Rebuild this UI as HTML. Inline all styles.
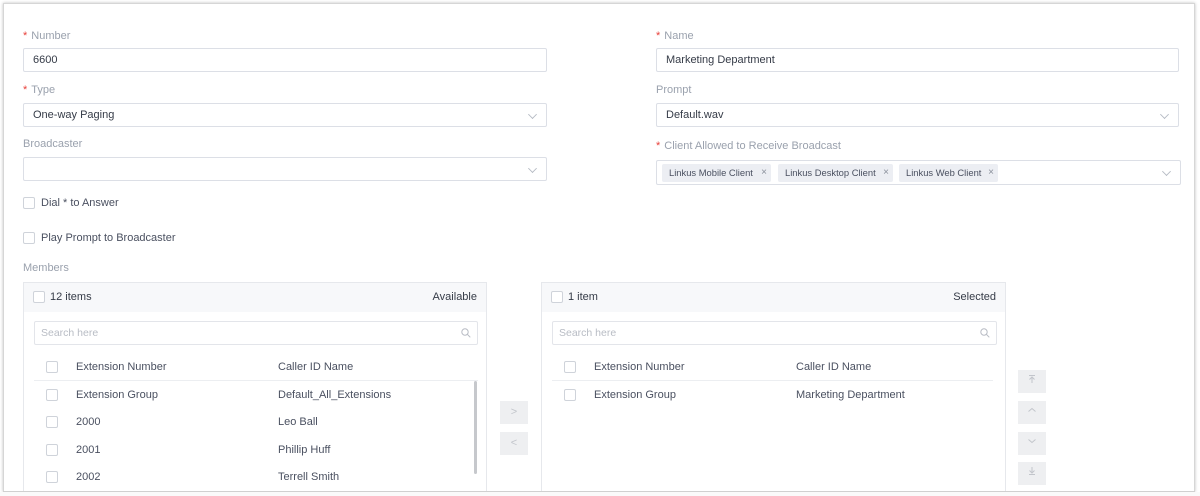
<!DOCTYPE html>
<html><head><meta charset="utf-8"><style>
*{box-sizing:border-box;margin:0;padding:0}
html,body{width:1200px;height:496px;overflow:hidden}
body{background:#fff;font-family:"Liberation Sans",sans-serif;font-size:11px;color:#353b47;position:relative}
.frame{position:absolute;left:3px;top:3px;width:1192px;height:489px;border:1px solid #d6d6d6;box-shadow:0 0 3px rgba(0,0,0,.25);background:#fff}
.a{position:absolute}
.lbl{color:#9aa1ad;font-size:11px}
.lbl b{color:#e8403a;font-weight:normal;margin-right:4px}
.inp{position:absolute;height:24px;border:1px solid #dcdfe6;border-radius:2px;padding-left:9px;line-height:22px;font-size:11px;color:#353b47}
.chev{position:absolute;right:10px;top:7px;width:7px;height:7px;border-right:1px solid #b5bac3;border-bottom:1px solid #b5bac3;transform:rotate(45deg) scale(.9);transform-origin:center}
.cb{position:absolute;width:12px;height:12px;border:1px solid #cfd3da;border-radius:2px;background:#fff}
.tag{position:absolute;top:3px;height:18px;background:#eceef3;border-radius:2px;padding:0 0 0 7px;line-height:18px;font-size:9.4px;color:#4a5060;white-space:nowrap}
.tag i{font-style:normal;font-size:10px;color:#8a909b;position:absolute;right:4px;top:0}
.panel{position:absolute;top:282px;height:215px;border:1px solid #e6e8ec;border-bottom:none}
.ph{height:29px;background:#f7f8fa;position:relative}
.srch{position:absolute;height:24px;border:1px solid #e3e5ea;border-radius:2px;padding-left:6px;line-height:22px;color:#b8bcc4;font-size:10.5px}
.srch svg{position:absolute;right:6px;top:6px}
.btn{position:absolute;width:28px;height:23px;background:#eeeff1;color:#c2c5cb;text-align:center;line-height:22px;font-size:11px}
.t{position:absolute;font-size:11px;color:#4a5060;line-height:13px;white-space:nowrap}
</style></head><body>
<div class="frame"></div>
<div class="a lbl" style="left:23px;top:30px"><b>*</b>Number</div>
<div class="inp" style="left:23px;top:48px;width:524px">6600</div>
<div class="a lbl" style="left:23px;top:84px"><b>*</b>Type</div>
<div class="inp" style="left:23px;top:103px;width:524px">One-way Paging<span class="chev"></span></div>
<div class="a lbl" style="left:23px;top:138px">Broadcaster</div>
<div class="inp" style="left:23px;top:157px;width:524px"><span class="chev"></span></div>
<div class="cb" style="left:23px;top:197px"></div><div class="t" style="left:41px;top:197px">Dial * to Answer</div>
<div class="cb" style="left:23px;top:232px"></div><div class="t" style="left:41px;top:232px">Play Prompt to Broadcaster</div>
<div class="a lbl" style="left:23px;top:262px">Members</div>

<div class="a lbl" style="left:656px;top:30px"><b>*</b>Name</div>
<div class="inp" style="left:656px;top:48px;width:523px">Marketing Department</div>
<div class="a lbl" style="left:656px;top:84px">Prompt</div>
<div class="inp" style="left:656px;top:103px;width:523px">Default.wav<span class="chev"></span></div>
<div class="a lbl" style="left:656px;top:140px"><b>*</b>Client Allowed to Receive Broadcast</div>
<div class="inp" style="left:656px;top:160px;width:525px;height:25px">
<span class="tag" style="left:5px;width:109px">Linkus Mobile Client<i>×</i></span>
<span class="tag" style="left:121px;width:115px">Linkus Desktop Client<i>×</i></span>
<span class="tag" style="left:242px;width:99px">Linkus Web Client<i>×</i></span>
<span class="chev"></span></div>

<div class="panel" style="left:23px;width:464px">
<div class="ph"><div class="cb" style="left:9px;top:8px"></div><span class="t" style="left:26px;top:8px;color:#353b47">12 items</span><span class="t" style="right:9px;top:8px;color:#353b47">Available</span></div>
<div class="srch" style="left:10px;top:38px;width:444px">Search here<svg width="10" height="10" viewBox="0 0 10 10"><circle cx="4" cy="4" r="3.2" fill="none" stroke="#b8bcc4"/><path d="M6.4 6.4L9.3 9.3" stroke="#b8bcc4"/></svg></div>
<div class="cb" style="left:22px;top:78px"></div><span class="t" style="left:52px;top:78px">Extension Number</span><span class="t" style="left:254px;top:78px">Caller ID Name</span>
<div class="a" style="left:10px;top:97px;width:444px;height:1px;background:#eceef1"></div>
<div class="a" style="left:450px;top:98px;width:3px;height:93px;background:#c6c8cc;border-radius:2px"></div>
<div class="cb" style="left:22px;top:106px"></div><span class="t" style="left:52px;top:106px">Extension Group</span><span class="t" style="left:254px;top:106px">Default_All_Extensions</span>
<div class="cb" style="left:22px;top:133px"></div><span class="t" style="left:52px;top:133px">2000</span><span class="t" style="left:254px;top:133px">Leo Ball</span>
<div class="cb" style="left:22px;top:161px"></div><span class="t" style="left:52px;top:161px">2001</span><span class="t" style="left:254px;top:161px">Phillip Huff</span>
<div class="cb" style="left:22px;top:188px"></div><span class="t" style="left:52px;top:188px">2002</span><span class="t" style="left:254px;top:188px">Terrell Smith</span>
</div>
<div class="btn" style="left:500px;top:401px">&gt;</div>
<div class="btn" style="left:500px;top:432px">&lt;</div>

<div class="panel" style="left:541px;width:465px">
<div class="ph"><div class="cb" style="left:9px;top:8px"></div><span class="t" style="left:26px;top:8px;color:#353b47">1 item</span><span class="t" style="right:9px;top:8px;color:#353b47">Selected</span></div>
<div class="srch" style="left:10px;top:38px;width:445px">Search here<svg width="10" height="10" viewBox="0 0 10 10"><circle cx="4" cy="4" r="3.2" fill="none" stroke="#b8bcc4"/><path d="M6.4 6.4L9.3 9.3" stroke="#b8bcc4"/></svg></div>
<div class="cb" style="left:22px;top:78px"></div><span class="t" style="left:52px;top:78px">Extension Number</span><span class="t" style="left:254px;top:78px">Caller ID Name</span>
<div class="a" style="left:10px;top:97px;width:441px;height:1px;background:#eceef1"></div>
<div class="cb" style="left:22px;top:106px"></div><span class="t" style="left:52px;top:106px">Extension Group</span><span class="t" style="left:254px;top:106px">Marketing Department</span>
</div>
<div class="btn" style="left:1018px;top:370px"><svg width="10" height="10" viewBox="0 0 10 10"><path d="M2 1.5H8M5 3V9M2.5 5.5L5 3L7.5 5.5" fill="none" stroke="#c2c5cb"/></svg></div>
<div class="btn" style="left:1018px;top:401px"><svg width="10" height="10" viewBox="0 0 10 10"><path d="M1.5 6.5L5 3.5L8.5 6.5" fill="none" stroke="#c2c5cb"/></svg></div>
<div class="btn" style="left:1018px;top:432px"><svg width="10" height="10" viewBox="0 0 10 10"><path d="M1.5 3.5L5 6.5L8.5 3.5" fill="none" stroke="#c2c5cb"/></svg></div>
<div class="btn" style="left:1018px;top:462px"><svg width="10" height="10" viewBox="0 0 10 10"><path d="M2 8.5H8M5 1V7M2.5 4.5L5 7L7.5 4.5" fill="none" stroke="#c2c5cb"/></svg></div>
<div class="a" style="left:3px;top:491px;width:1192px;height:1px;background:#d0d0d0"></div>
<div class="a" style="left:0;top:492px;width:1200px;height:4px;background:#fafafa"></div>
</body></html>
